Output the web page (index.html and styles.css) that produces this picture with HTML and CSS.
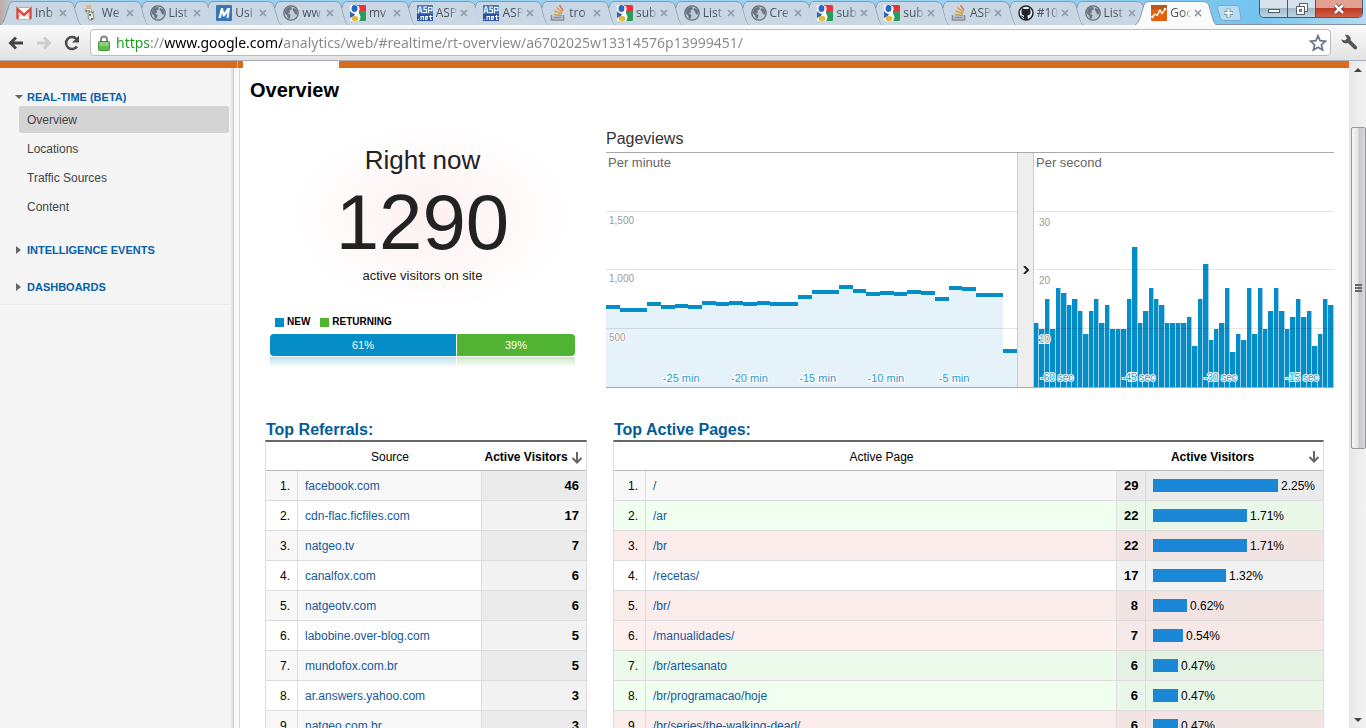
FILE: index.html
```html
<!doctype html>
<html lang="en">
  <head>
    <meta charset="UTF-8" />
    <meta name="viewport" content="width=device-width, initial-scale=1.0" />
    <title>Google Analytics</title>
    <link rel="stylesheet" href="styles.css">
  </head>
  <body>
    <svg class="sprite" aria-hidden="true">
      <symbol id="tab-shape" viewBox="0 0 82 25" preserveAspectRatio="none">
        <path d="M15 25Q13 25 11 19L8 8Q9 1 13 1H68Q73 1 74 5L78 19Q80 25 82 25Z" fill="#c9d7e5" />
        <path d="M8 8Q9 1.500 13 1.500H68Q73 1.500 74 5L78 19Q80 25 82 25" fill="none" stroke="#8d9bab" />
      </symbol>
      <symbol id="tab-first" viewBox="0 0 82 25" preserveAspectRatio="none">
        <path d="M0 25Q3 24 5 18L9 5Q10 1.500 14 1.500H68Q73 1.500 74 5L78 19Q80 25 82 25" fill="#c9d7e5" stroke="#8d9bab" />
      </symbol>
      <symbol id="tab-active" viewBox="0 0 82 26" preserveAspectRatio="none">
        <path d="M0 26V25Q3 24 5 18L9 5Q10 1.500 14 1.500H68Q73 1.500 74 5L78 19Q80 25 82 25V26Z" fill="#fafafa" />
        <path d="M0 25Q3 24 5 18L9 5Q10 1.500 14 1.500H68Q73 1.500 74 5L78 19Q80 25 82 25" fill="none" stroke="#8d9bab" />
      </symbol>
      <symbol id="i-gmail" viewBox="0 0 16 16">
        <path d="M1 3h14v11H1z" fill="#fff" />
        <path d="M1 14L6 8M15 14l-5-6" stroke="#d8a8a5" />
        <path d="M1.500 14V4L8 10l6.500-6v10" fill="none" stroke="#dc4a41" stroke-width="2.400" />
        <path d="M1 2.500h14M1 14.500h14" stroke="#e79b96" />
      </symbol>
      <symbol id="i-pot" viewBox="0 0 16 16">
        <path d="M3 1q2 0 2 2M6 0q2 1 1 3" fill="none" stroke="#eba95b" stroke-width="1.500" />
        <path d="M2 4l6-.5 1 3-5 2z" fill="#f5f0e2" stroke="#a59a7c" stroke-width=".7" />
        <path d="M5 8l4-1.500 1.500 4 .5 3-3 2-2.500-1.500z" fill="#e9e8e0" stroke="#76745f" stroke-width=".7" />
        <path d="M2.500 5h2v2h-2zM6 9h2v2H6zM8 13h2v2H8z" fill="#6f8048" />
        <path d="M5 5.500h2v1H5zM8 7.500l3-1v1z" fill="#444" />
      </symbol>
      <symbol id="i-globe" viewBox="0 0 16 16">
        <circle cx="8" cy="8" r="7.200" fill="#c2cbd3" stroke="#5f6c77" stroke-width="1.300" />
        <path d="M3 3.500L6 2l3 .5-.5 2L6.500 5.500 7 7.500 5 8.500 7.500 10 7 13l-2 1-1-3.500L1.500 8zM10 3l3 1 1.500 3-1 3-1.500-1-1.500-3-1-1z" fill="#6a7782" />
      </symbol>
      <symbol id="i-m" viewBox="0 0 16 16">
        <rect width="16" height="16" rx="1" fill="#3a77b8" />
        <path d="M2.500 13L5 3h2l1 5 3.500-5h2.500l-1.500 10h-2l1-5.500-3 4H7L6 8l-1.200 5z" fill="#fff" />
      </symbol>
      <symbol id="i-google" viewBox="0 0 16 16">
        <rect width="16" height="16" rx="1" fill="#fff" />
        <path d="M7 0h8q1 0 1 1v5H9z" fill="#e8323c" />
        <path d="M9 6h7v9q0 1-1 1H9q3-4 0-7z" fill="#2a9d5c" />
        <path d="M0 6q2 3 5 3L4 11l-4 2z" fill="#2f66c4" />
        <ellipse cx="4.500" cy="3.500" rx="3" ry="3.500" fill="#2868c8" />
        <ellipse cx="5" cy="13.500" rx="3.500" ry="2.500" fill="#e5b73b" />
        <path d="M8 1q2 4-1 6l2 3" fill="none" stroke="#fff" stroke-width="1.500" />
      </symbol>
      <symbol id="i-asp" viewBox="0 0 16 16">
        <rect width="16" height="16" rx="1" fill="#4878c0" />
        <rect y="9" width="16" height="7" fill="#2b51a3" />
        <path d="M1 8l1.500-6h1L5 8M2 6h2.500M10 2H7v2.500h2.500V7.500H6M11.500 8V2.500H15v3h-3M1 14.500h1M4 15v-3.500h2.500V15M10.500 14.500h-2v-3h2v1.500h-2M12 11.500h3.500M13.500 10v4.500h1.500" fill="none" stroke="#fff" stroke-width="1.100" />
      </symbol>
      <symbol id="i-stack" viewBox="0 0 16 16">
        <path d="M1.500 10v5h12v-5" fill="none" stroke="#8b8d90" stroke-width="1.700" />
        <path d="M3.500 12.500h8" stroke="#8b8d90" stroke-width="1.700" />
        <path d="M4 9.500l8 1" stroke="#b89b5c" stroke-width="1.600" />
        <path d="M4.500 6l7.500 2.800" stroke="#dd9c3c" stroke-width="1.600" />
        <path d="M6.500 2.500l6 4.800" stroke="#e8993c" stroke-width="1.600" />
        <path d="M9.500 0l3.500 5.500" stroke="#e27552" stroke-width="1.600" />
      </symbol>
      <symbol id="i-github" viewBox="0 0 16 16">
        <circle cx="8" cy="8" r="7" fill="#e8edf2" stroke="#20252b" stroke-width="1.500" />
        <path d="M4 3l2 1h4l2-1 .5 3q.5 4-3 4.500L10 15H6v-4.500Q3 10 3.500 6z" fill="#20252b" />
        <path d="M3 11q2 0 3 2" fill="none" stroke="#20252b" />
      </symbol>
      <symbol id="i-analytics" viewBox="0 0 16 16">
        <rect width="16" height="16" rx="1" fill="#e2610f" />
        <path d="M0 0h16v4H0z" fill="#b9561c" />
        <path d="M1 12l3-3 2 1.500 3-5 2 3 3.500-5" fill="none" stroke="#fff" stroke-width="1.300" />
        <circle cx="1.500" cy="12" r="1.300" fill="#fff" />
        <circle cx="8.800" cy="6" r="1.300" fill="#fff" />
        <circle cx="14" cy="4" r="1.300" fill="#fff" />
      </symbol>
      <symbol id="i-down" viewBox="0 0 12 12">
        <path d="M6 0v10M1.500 6L6 10.500 10.500 6" fill="none" stroke="#666" stroke-width="2" />
      </symbol>
    </svg>

    <header class="titlebar">
      <nav class="tabs" aria-label="Open tabs">
        <div class="tab"><svg class="tab-bg"><use href="#tab-first" /></svg><svg class="favicon"><use href="#i-gmail" /></svg><a href="#">Inb</a><button aria-label="Close tab"><svg viewBox="0 0 8 8"><path d="M1 1l6 6M7 1l-6 6" /></svg></button></div>
        <div class="tab"><svg class="tab-bg"><use href="#tab-shape" /></svg><svg class="favicon"><use href="#i-pot" /></svg><a href="#">We</a><button aria-label="Close tab"><svg viewBox="0 0 8 8"><path d="M1 1l6 6M7 1l-6 6" /></svg></button></div>
        <div class="tab"><svg class="tab-bg"><use href="#tab-shape" /></svg><svg class="favicon"><use href="#i-globe" /></svg><a href="#">List</a><button aria-label="Close tab"><svg viewBox="0 0 8 8"><path d="M1 1l6 6M7 1l-6 6" /></svg></button></div>
        <div class="tab"><svg class="tab-bg"><use href="#tab-shape" /></svg><svg class="favicon"><use href="#i-m" /></svg><a href="#">Usi</a><button aria-label="Close tab"><svg viewBox="0 0 8 8"><path d="M1 1l6 6M7 1l-6 6" /></svg></button></div>
        <div class="tab"><svg class="tab-bg"><use href="#tab-shape" /></svg><svg class="favicon"><use href="#i-globe" /></svg><a href="#">ww</a><button aria-label="Close tab"><svg viewBox="0 0 8 8"><path d="M1 1l6 6M7 1l-6 6" /></svg></button></div>
        <div class="tab"><svg class="tab-bg"><use href="#tab-shape" /></svg><svg class="favicon"><use href="#i-google" /></svg><a href="#">mv</a><button aria-label="Close tab"><svg viewBox="0 0 8 8"><path d="M1 1l6 6M7 1l-6 6" /></svg></button></div>
        <div class="tab"><svg class="tab-bg"><use href="#tab-shape" /></svg><svg class="favicon"><use href="#i-asp" /></svg><a href="#">ASP</a><button aria-label="Close tab"><svg viewBox="0 0 8 8"><path d="M1 1l6 6M7 1l-6 6" /></svg></button></div>
        <div class="tab"><svg class="tab-bg"><use href="#tab-shape" /></svg><svg class="favicon"><use href="#i-asp" /></svg><a href="#">ASP</a><button aria-label="Close tab"><svg viewBox="0 0 8 8"><path d="M1 1l6 6M7 1l-6 6" /></svg></button></div>
        <div class="tab"><svg class="tab-bg"><use href="#tab-shape" /></svg><svg class="favicon"><use href="#i-stack" /></svg><a href="#">tro</a><button aria-label="Close tab"><svg viewBox="0 0 8 8"><path d="M1 1l6 6M7 1l-6 6" /></svg></button></div>
        <div class="tab"><svg class="tab-bg"><use href="#tab-shape" /></svg><svg class="favicon"><use href="#i-google" /></svg><a href="#">sub</a><button aria-label="Close tab"><svg viewBox="0 0 8 8"><path d="M1 1l6 6M7 1l-6 6" /></svg></button></div>
        <div class="tab"><svg class="tab-bg"><use href="#tab-shape" /></svg><svg class="favicon"><use href="#i-globe" /></svg><a href="#">List</a><button aria-label="Close tab"><svg viewBox="0 0 8 8"><path d="M1 1l6 6M7 1l-6 6" /></svg></button></div>
        <div class="tab"><svg class="tab-bg"><use href="#tab-shape" /></svg><svg class="favicon"><use href="#i-globe" /></svg><a href="#">Cre</a><button aria-label="Close tab"><svg viewBox="0 0 8 8"><path d="M1 1l6 6M7 1l-6 6" /></svg></button></div>
        <div class="tab"><svg class="tab-bg"><use href="#tab-shape" /></svg><svg class="favicon"><use href="#i-google" /></svg><a href="#">sub</a><button aria-label="Close tab"><svg viewBox="0 0 8 8"><path d="M1 1l6 6M7 1l-6 6" /></svg></button></div>
        <div class="tab"><svg class="tab-bg"><use href="#tab-shape" /></svg><svg class="favicon"><use href="#i-google" /></svg><a href="#">sub</a><button aria-label="Close tab"><svg viewBox="0 0 8 8"><path d="M1 1l6 6M7 1l-6 6" /></svg></button></div>
        <div class="tab"><svg class="tab-bg"><use href="#tab-shape" /></svg><svg class="favicon"><use href="#i-stack" /></svg><a href="#">ASP</a><button aria-label="Close tab"><svg viewBox="0 0 8 8"><path d="M1 1l6 6M7 1l-6 6" /></svg></button></div>
        <div class="tab"><svg class="tab-bg"><use href="#tab-shape" /></svg><svg class="favicon"><use href="#i-github" /></svg><a href="#">#10</a><button aria-label="Close tab"><svg viewBox="0 0 8 8"><path d="M1 1l6 6M7 1l-6 6" /></svg></button></div>
        <div class="tab"><svg class="tab-bg"><use href="#tab-shape" /></svg><svg class="favicon"><use href="#i-globe" /></svg><a href="#">List</a><button aria-label="Close tab"><svg viewBox="0 0 8 8"><path d="M1 1l6 6M7 1l-6 6" /></svg></button></div>
        <div class="tab active"><svg class="tab-bg"><use href="#tab-active" /></svg><svg class="favicon"><use href="#i-analytics" /></svg><a href="#">Goo</a><button aria-label="Close tab"><svg viewBox="0 0 8 8"><path d="M1 1l6 6M7 1l-6 6" /></svg></button></div>
      </nav>
      <button class="new-tab" aria-label="New tab">
        <svg viewBox="0 0 26 16" width="26" height="16">
          <path d="M1.500 3Q1 .5 3 .5h17q2 0 3 2l2 10q.5 3-2 3H8q-2.500 0-3.500-2z" fill="#b5dcf1" stroke="#7fa9c2" />
          <path d="M12.500 3.500v9M8 8h9" stroke="#6b95ae" stroke-width="4" />
          <path d="M12.500 4v8M8.500 8h8" stroke="#fff" stroke-width="2" />
        </svg>
      </button>
      <div class="window-buttons">
        <button class="win" aria-label="Minimize">
          <svg viewBox="0 0 14 12" width="14" height="12"><rect x="1.500" y="6.500" width="11" height="3" fill="#fff" stroke="#555c68" /></svg>
        </button>
        <button class="win" aria-label="Restore">
          <svg viewBox="0 0 14 12" width="14" height="12"><path d="M4.500.5h8v8h-8z" fill="#fff" stroke="#555c68" /><path d="M1.500 3.500h8v8h-8z" fill="#fff" stroke="#555c68" /><path d="M4.500 6.500h2v2h-2z" fill="#8bb" stroke="#555c68" /></svg>
        </button>
        <button class="win win-close" aria-label="Close">
          <svg viewBox="0 0 14 12" width="14" height="12"><path d="M3 2l8 8M11 2l-8 8" stroke="#5f3030" stroke-width="4" /><path d="M3 2l8 8M11 2l-8 8" stroke="#fff" stroke-width="2.500" /></svg>
        </button>
      </div>
    </header>

    <div class="toolbar">
      <button aria-label="Back">
        <svg viewBox="0 0 16 14" width="16" height="14"><path d="M15 7H3M8 1.500L2.500 7 8 12.500" fill="none" stroke="#444" stroke-width="3" /></svg>
      </button>
      <button aria-label="Forward">
        <svg viewBox="0 0 16 14" width="16" height="14"><path d="M1 7h12M8 1.500L13.500 7 8 12.500" fill="none" stroke="#cdcdcd" stroke-width="3" /></svg>
      </button>
      <button aria-label="Reload">
        <svg viewBox="0 0 16 16" width="16" height="16"><path d="M13 11.500A6 6 0 1 1 12.500 4" fill="none" stroke="#4a4a4a" stroke-width="2.500" /><path d="M15 .5V7.500H8z" fill="#4a4a4a" /></svg>
      </button>
      <div class="omnibox">
        <svg viewBox="0 0 12 16" width="12" height="16">
          <path d="M3 8V4.500Q3 1.500 6 1.500T9 4.500V8" fill="none" stroke="#7f8a86" stroke-width="2" />
          <rect x=".5" y="6.500" width="11" height="9" rx="1" fill="#62bb50" stroke="#44903b" />
          <path d="M1 8h10M1 10h10" stroke="#b2e0a0" />
        </svg>
        <input class="url" type="text" aria-label="Address" spellcheck="false" value="https://www.google.com/analytics/web/#realtime/rt-overview/a6702025w13314576p13999451/" />
        <button aria-label="Bookmark this page">
          <svg viewBox="0 0 18 18" width="18" height="18"><path d="M9 1.800l2.100 4.900 5.300.5-4 3.500 1.200 5.200L9 13.200l-4.600 2.700 1.200-5.200-4-3.500 5.300-.5z" fill="#fff" stroke="#69738d" stroke-width="1.700" /></svg>
        </button>
      </div>
      <button aria-label="Settings">
        <svg viewBox="0 0 17 17" width="17" height="17"><path d="M4 .8Q8 0 9.500 3.500q.5 1.500 0 2.500l6.300 6.500q.8 1 0 2.200-1.200 1.300-2.500.5L7 9Q3 10.500.8 7L.5 5.500l3.500 1L6 4.500z" fill="#555" /></svg>
      </button>
    </div>

    <div class="viewport">
      <div class="page">
        <div class="topbar">
          <span class="topbar-left"></span>
          <span class="topbar-tab"></span>
          <span class="topbar-rest"></span>
        </div>
        <div class="columns">
          <aside class="sidebar">
            <nav class="menu">
              <a class="menu-title open" href="#">REAL-TIME (BETA)</a>
              <ul>
                <li><a class="selected" href="#">Overview</a></li>
                <li><a href="#">Locations</a></li>
                <li><a href="#">Traffic Sources</a></li>
                <li><a href="#">Content</a></li>
              </ul>
              <a class="menu-title" href="#">INTELLIGENCE EVENTS</a>
              <a class="menu-title" href="#">DASHBOARDS</a>
            </nav>
          </aside>
          <div class="splitter"></div>

          <main class="content">
            <h1>Overview</h1>
            <div class="overview">
              <section class="visitors">
                <div class="counter">
                  <h2>Right now</h2>
                  <p class="count">1290</p>
                  <p class="caption">active visitors on site</p>
                </div>
                <div class="legend">
                  <span class="key key-new">NEW</span>
                  <span class="key key-returning">RETURNING</span>
                </div>
                <div class="split">
                  <span class="split-new" style="width: 61%">61%</span>
                  <span class="split-returning">39%</span>
                </div>
                <div class="reflection">
                  <span class="reflect-new" style="width: 61%"></span>
                  <span class="reflect-returning"></span>
                </div>
              </section>

              <section class="pageviews">
                <h2>Pageviews</h2>
                <div class="charts">
                  <div class="chart chart-minute">
                    <div class="bars" id="perMinute"></div>
                    <div class="grid"><span></span><span>1,500</span><span>1,000</span><span>500</span></div>
                    <h3>Per minute</h3>
                    <div class="axis"><span>-25 min</span><span>-20 min</span><span>-15 min</span><span>-10 min</span><span>-5 min</span></div>
                  </div>
                  <button class="expander" aria-label="Expand">
                    <svg viewBox="0 0 6 8" width="6" height="8"><path d="M1 0l4 4-4 4" fill="none" stroke="#222" stroke-width="2" /></svg>
                  </button>
                  <div class="chart chart-second">
                    <div class="bars" id="perSecond"></div>
                    <div class="grid"><span></span><span>30</span><span>20</span><span>10</span></div>
                    <h3>Per second</h3>
                    <div class="axis"><span>-60 sec</span><span>-45 sec</span><span>-30 sec</span><span>-15 sec</span></div>
                  </div>
                </div>
              </section>
            </div>

            <div class="reports">
              <section class="referrals">
                <h2>Top Referrals:</h2>
                <table>
                  <colgroup><col class="col-rank" /><col /><col class="col-total" /></colgroup>
                  <thead>
                    <tr><th></th><th>Source</th><th class="sorted"><span>Active Visitors</span> <svg class="sort"><use href="#i-down" /></svg></th></tr>
                  </thead>
                  <tbody>
                    <tr><td>1.</td><td><a href="#">facebook.com</a></td><td class="metric">46</td></tr>
                    <tr><td>2.</td><td><a href="#">cdn-flac.ficfiles.com</a></td><td class="metric">17</td></tr>
                    <tr><td>3.</td><td><a href="#">natgeo.tv</a></td><td class="metric">7</td></tr>
                    <tr><td>4.</td><td><a href="#">canalfox.com</a></td><td class="metric">6</td></tr>
                    <tr><td>5.</td><td><a href="#">natgeotv.com</a></td><td class="metric">6</td></tr>
                    <tr><td>6.</td><td><a href="#">labobine.over-blog.com</a></td><td class="metric">5</td></tr>
                    <tr><td>7.</td><td><a href="#">mundofox.com.br</a></td><td class="metric">5</td></tr>
                    <tr><td>8.</td><td><a href="#">ar.answers.yahoo.com</a></td><td class="metric">3</td></tr>
                    <tr><td>9.</td><td><a href="#">natgeo.com.br</a></td><td class="metric">3</td></tr>
                  </tbody>
                </table>
              </section>

              <section class="active-pages">
                <h2>Top Active Pages:</h2>
                <table>
                  <colgroup><col class="col-rank" /><col /><col class="col-count" /><col class="col-share" /></colgroup>
                  <thead>
                    <tr><th></th><th>Active Page</th><th class="sorted" colspan="2"><div class="sort-row"><span>Active Visitors</span><svg class="sort"><use href="#i-down" /></svg></div></th></tr>
                  </thead>
                  <tbody>
                    <tr><td>1.</td><td><a href="#">/</a></td><td class="metric">29</td><td class="metric share"><div><span class="bar" style="width: 125px"></span>2.25%</div></td></tr>
                    <tr class="up"><td>2.</td><td><a href="#">/ar</a></td><td class="metric">22</td><td class="metric share"><div><span class="bar" style="width: 94px"></span>1.71%</div></td></tr>
                    <tr class="down"><td>3.</td><td><a href="#">/br</a></td><td class="metric">22</td><td class="metric share"><div><span class="bar" style="width: 94px"></span>1.71%</div></td></tr>
                    <tr><td>4.</td><td><a href="#">/recetas/</a></td><td class="metric">17</td><td class="metric share"><div><span class="bar" style="width: 73px"></span>1.32%</div></td></tr>
                    <tr class="down"><td>5.</td><td><a href="#">/br/</a></td><td class="metric">8</td><td class="metric share"><div><span class="bar" style="width: 34px"></span>0.62%</div></td></tr>
                    <tr class="down"><td>6.</td><td><a href="#">/manualidades/</a></td><td class="metric">7</td><td class="metric share"><div><span class="bar" style="width: 30px"></span>0.54%</div></td></tr>
                    <tr class="up"><td>7.</td><td><a href="#">/br/artesanato</a></td><td class="metric">6</td><td class="metric share"><div><span class="bar" style="width: 25px"></span>0.47%</div></td></tr>
                    <tr class="up"><td>8.</td><td><a href="#">/br/programacao/hoje</a></td><td class="metric">6</td><td class="metric share"><div><span class="bar" style="width: 25px"></span>0.47%</div></td></tr>
                    <tr class="down"><td>9.</td><td><a href="#">/br/series/the-walking-dead/</a></td><td class="metric">6</td><td class="metric share"><div><span class="bar" style="width: 25px"></span>0.47%</div></td></tr>
                  </tbody>
                </table>
              </section>
            </div>
          </main>
        </div>
      </div>

      <div class="scrollbar" aria-hidden="true">
        <svg viewBox="0 0 8 4" width="8" height="4"><path d="M0 4l4-4 4 4z" fill="#444" /></svg>
        <div class="track">
          <div class="thumb"><span></span><span></span><span></span></div>
        </div>
        <svg viewBox="0 0 8 4" width="8" height="4"><path d="M0 0l4 4 4-4z" fill="#444" /></svg>
      </div>
    </div>

    <script src="charts.js"></script>
  </body>
</html>
```

FILE: styles.css
```css
* {
  box-sizing: border-box;
}
body {
  margin: 0;
  height: 100vh;
  display: flex;
  flex-direction: column;
  overflow: hidden;
  font-family: "Liberation Sans", Arial, sans-serif;
  font-size: 12px;
  color: #000;
  background: #fff;
}
h1,
h2,
h3,
p,
ul {
  margin: 0;
  padding: 0;
}
ul {
  list-style: none;
}
a {
  color: #15599c;
  text-decoration: none;
}
button {
  padding: 0;
  border: 0;
  background: none;
  font: inherit;
}
button svg {
  display: block;
}
.sprite {
  position: absolute;
  width: 0;
  height: 0;
}

/* Window title bar and tabs */
.titlebar {
  display: flex;
  flex: none;
  height: 25px;
  background: linear-gradient(90deg, #c0a9a4, #b3d3e9 1%, #94d0f2 8%, #94d2f4 75%, #74c4f0 92%, #b4dcf2);
  box-shadow: inset 0 -1px #8592a0;
}
.tabs {
  display: flex;
  flex: 1;
  min-width: 0;
  padding-right: 14px;
}
.tab {
  position: relative;
  display: flex;
  flex: 1 1 0;
  align-items: center;
  min-width: 0;
  padding-left: 16px;
  font-family: "Open Sans", "Noto Sans", sans-serif;
  font-size: 12px;
}
.tab-bg {
  position: absolute;
  top: 0;
  left: 0;
  width: calc(100% + 15px);
  height: 25px;
}
.tab.active .tab-bg {
  height: 26px;
}
.favicon {
  position: relative;
  flex: none;
  width: 16px;
  height: 16px;
}
.tab a {
  position: relative;
  flex: none;
  width: 22px;
  margin-left: 3px;
  overflow: hidden;
  white-space: nowrap;
  color: #4c535b;
  mask-image: linear-gradient(90deg, #000 60%, transparent);
}
.tab button {
  position: relative;
  flex: none;
  margin-left: 2px;
}
.tab button svg {
  width: 8px;
  height: 8px;
  stroke: #8d98a4;
  stroke-width: 1.5;
}
.new-tab {
  align-self: center;
  flex: none;
}
.window-buttons {
  display: flex;
  flex: none;
  height: 18px;
  margin: 0 3px 0 17px;
  border: 1px solid #49576a;
  border-top: 0;
  border-radius: 0 0 5px 5px;
  overflow: hidden;
}
.win {
  display: grid;
  place-items: center;
  width: 28px;
  border-right: 1px solid #49576a;
  background: linear-gradient(#d5e2ec 45%, #9fb9cb 50%, #bed5e3);
}
.win-close {
  width: 46px;
  border-right: 0;
  background: linear-gradient(#e2a091 45%, #c13a24 50%, #cf6046);
}

/* Toolbar */
.toolbar {
  display: flex;
  flex: none;
  align-items: center;
  gap: 12px;
  height: 36px;
  padding: 0 8px;
  border-bottom: 1px solid #a9aeb8;
  background: linear-gradient(#fafafa, #e3e3e3);
}
.omnibox {
  display: flex;
  flex: 1;
  align-items: center;
  gap: 6px;
  height: 27px;
  margin: 0 -2px 0 -2px;
  padding: 0 3px 0 7px;
  border: 1px solid #bcbcbc;
  border-radius: 4px;
  background: #fff;
}
.url {
  flex: 1;
  min-width: 0;
  height: 25px;
  padding: 0;
  border: 0;
  outline: 0;
  font-family: "Noto Sans", "Open Sans", sans-serif;
  font-size: 14px;
  background-image: linear-gradient(90deg, #1a9b1a 34px, #888 34px 49px, #000 49px 166px, #888 166px);
  -webkit-background-clip: text;
  background-clip: text;
  -webkit-text-fill-color: transparent;
}

/* Page frame */
.viewport {
  display: flex;
  flex: 1;
  min-height: 0;
}
.page {
  display: flex;
  flex: 1;
  flex-direction: column;
  min-width: 0;
  overflow: hidden;
}
.topbar {
  display: flex;
  flex: none;
  height: 7px;
}
.topbar-left {
  width: 243px;
  background: linear-gradient(90deg, #d96b20 237px, #eda574 237px 238px, #d96b20 238px);
}
.topbar-tab {
  width: 96px;
}
.topbar-rest {
  flex: 1;
  background: #d96b20;
}
.columns {
  display: flex;
  flex: 1;
  min-height: 0;
}
.sidebar {
  flex: none;
  width: 234px;
  border-right: 1px solid #ccc;
  background: linear-gradient(90deg, transparent 230px, #ddd), #f5f5f5;
}
.splitter {
  flex: none;
  width: 6px;
  border-right: 1px solid #d8d8d8;
  background: #f8f8f8;
}
.menu {
  padding: 20px 4px 8px 19px;
  border-bottom: 1px solid #ebebeb;
}
.menu-title {
  display: flex;
  align-items: center;
  gap: 6px;
  height: 18px;
  margin: 0 0 19px -3px;
  font-size: 11px;
  font-weight: bold;
  color: #0860a8;
}
.menu-title:last-child {
  margin-bottom: 0;
}
.menu-title::before {
  content: "";
  border: 4px solid transparent;
  border-left: 5px solid #666;
  border-right: 0;
}
.menu-title.open {
  gap: 4px;
  margin: 0 0 0 -4px;
}
.menu-title.open::before {
  border: 4px solid transparent;
  border-top-color: #666;
  border-bottom: 0;
}
.menu ul {
  display: grid;
  gap: 2px;
  margin-bottom: 21px;
}
.menu li a {
  display: block;
  padding: 1px 8px 0;
  border-radius: 2px;
  line-height: 26px;
  color: #444;
}
.menu li a.selected {
  background: #d4d4d4;
}
.content {
  flex: 1;
  min-width: 0;
}
h1 {
  padding: 10px 10px 0;
  font-size: 20px;
  line-height: 24px;
}

/* Visitor counter */
.overview {
  display: flex;
  gap: 31px;
  padding: 24px 15px 0 30px;
}
.visitors {
  flex: none;
  width: 305px;
}
.counter {
  height: 188px;
  padding-top: 16px;
  text-align: center;
  color: #222;
  background: radial-gradient(ellipse 140px 94px at 162px 90px, #fdf0ef, #fff);
}
.counter h2 {
  font-size: 26px;
  font-weight: normal;
  line-height: 36px;
}
.count {
  font-size: 78px;
  line-height: 88px;
}
.caption {
  font-size: 13px;
  line-height: 20px;
}
.legend {
  display: flex;
  gap: 10px;
  padding: 0 5px;
  font-size: 10px;
  font-weight: bold;
  line-height: 16px;
}
.key {
  display: flex;
  align-items: center;
  gap: 3px;
}
.key::before {
  content: "";
  width: 9px;
  height: 9px;
  background: #058dc7;
}
.key-returning::before {
  background: #50b432;
}
.split {
  display: flex;
  gap: 1px;
  height: 22px;
  margin-top: 4px;
  border-radius: 4px;
  overflow: hidden;
  font-size: 11px;
  line-height: 22px;
  text-align: center;
  color: #fff;
}
.split-new {
  background: #058dc7;
}
.split-returning {
  flex: 1;
  background: #50b432;
}
.reflection {
  display: flex;
  gap: 1px;
  height: 10px;
  margin-top: 1px;
}
.reflect-new {
  background: linear-gradient(#b9dff0, #fff);
}
.reflect-returning {
  flex: 1;
  background: linear-gradient(#cbe8c3, #fff);
}

/* Pageviews charts */
.pageviews {
  flex: 1;
  min-width: 0;
}
.pageviews h2 {
  font-size: 16px;
  font-weight: normal;
  line-height: 26px;
  color: #333;
}
.charts {
  display: flex;
  height: 236px;
  border-top: 1px solid #aaa;
  border-bottom: 1px solid #aaa;
}
.chart {
  position: relative;
  min-width: 0;
}
.chart-minute {
  flex: 411;
}
.chart-second {
  flex: 300;
}
.chart h3 {
  position: absolute;
  top: 1px;
  left: 2px;
  font-size: 13px;
  font-weight: normal;
  line-height: 18px;
  color: #666;
}
.bars {
  display: flex;
  align-items: flex-end;
  height: 100%;
}
.bars span {
  flex: 1;
}
#perMinute span {
  border-top: 4px solid #058dc7;
  background: #e5f2f9;
}
#perSecond span {
  border-right: 1px solid #9bd0e8;
  background: #058dc7;
}
.grid {
  position: absolute;
  inset: 0;
  display: grid;
  grid-template-rows: repeat(4, 1fr);
}
.grid span {
  padding: 2px 3px;
  border-bottom: 1px solid rgba(0, 0, 0, 0.1);
  font-size: 10px;
  line-height: 14px;
  color: #999;
  -webkit-text-stroke: 2px #fff;
  paint-order: stroke fill;
}
.grid span:last-child {
  border-bottom: 0;
}
.chart-second .grid span {
  padding: 4px 5px;
}
.axis {
  position: absolute;
  bottom: 1px;
  left: 10%;
  right: 7%;
  display: flex;
  font-size: 11px;
  line-height: 16px;
  text-align: center;
  color: #2a97cc;
  -webkit-text-stroke: 2px #fff;
  paint-order: stroke fill;
}
.axis span {
  flex: 1;
}
.chart-second .axis {
  left: -6%;
  right: -3%;
  font-size: 10px;
}
.expander {
  display: grid;
  place-items: center;
  flex: none;
  width: 17px;
  border: solid #ccc;
  border-width: 0 1px;
  background: #eee;
}

/* Report tables */
.reports {
  display: flex;
  gap: 26px;
  padding: 31px 25px 0 25px;
}
.referrals {
  flex: none;
  width: 322px;
}
.active-pages {
  flex: 1;
  min-width: 0;
}
.reports h2 {
  padding-left: 1px;
  font-size: 16px;
  line-height: 21px;
  color: #005c9c;
}
table {
  width: 100%;
  table-layout: fixed;
  border-spacing: 0;
  border: solid #dcdcdc;
  border-width: 0 1px;
  border-top: 2px solid #666;
}
.col-rank {
  width: 32px;
}
.col-total {
  width: 104px;
}
.col-count {
  width: 29px;
}
.col-share {
  width: 177px;
}
th {
  height: 29px;
  padding: 2px 0 0;
  border-bottom: 1px solid #bbb;
  font-weight: normal;
}
th.sorted {
  padding-right: 3px;
  font-weight: bold;
  text-align: right;
  white-space: nowrap;
}
.sort {
  width: 12px;
  height: 12px;
  vertical-align: middle;
}
.sort-row {
  display: flex;
  align-items: center;
  text-align: center;
}
.sort-row span {
  flex: 1;
}
td {
  height: 30px;
  padding: 0 7px;
  border-right: 1px solid #dcdcdc;
  border-bottom: 1px solid #dcdcdc;
}
td:first-child {
  padding-left: 0;
  text-align: right;
}
td:last-child {
  border-right: 0;
}
tbody tr:nth-child(odd) {
  background: #f8f8f8;
}
tbody tr.up {
  background: #f0fff0;
}
tbody tr.up:nth-child(odd) {
  background: #ebfaeb;
}
tbody tr.down {
  background: #fff0f0;
}
tbody tr.down:nth-child(odd) {
  background: #fbecec;
}
.metric {
  background: rgba(0, 0, 0, 0.05);
  text-align: right;
  font-size: 13px;
  font-weight: bold;
}
.up .metric,
.down .metric {
  background: rgba(0, 0, 0, 0.03);
}
.metric.share {
  font-size: 12px;
  font-weight: normal;
}
.share div {
  display: flex;
  align-items: center;
  gap: 3px;
}
.bar {
  height: 13px;
  background: #1a87d7;
}

/* Scroll bar */
.scrollbar {
  display: flex;
  flex: none;
  flex-direction: column;
  align-items: center;
  width: 17px;
  padding: 7px 0 6px;
  border-left: 1px solid #e3e3e3;
  background: linear-gradient(90deg, #e8e8e8, #f3f3f3);
}
.track {
  flex: 1;
  width: 15px;
  padding-top: 55px;
}
.thumb {
  display: flex;
  flex-direction: column;
  align-items: center;
  justify-content: center;
  gap: 1px;
  height: 55%;
  max-height: 322px;
  min-height: 40px;
  border: 1px solid #989898;
  border-radius: 2px;
  background: linear-gradient(90deg, #f5f5f5, #e6e6e8 45%, #c6c6cb 55%, #d9d9dc);
}
.thumb span {
  width: 7px;
  height: 2px;
  background: #666;
}
```

FILE: charts.js
```js
const perMinute = [
  704, 675, 675, 723, 704, 706, 700, 732, 726, 738, 726, 738, 726, 723, 783,
  831, 831, 868, 840, 809, 820, 809, 831, 817, 772, 860, 857, 800, 800, 329,
];
const perSecond = [
  11, 10, 15, 10, 17, 16, 14, 15, 13, 9, 13, 15, 11, 14, 10, 10, 10, 15, 24,
  11, 13, 17, 15, 14, 11, 11, 11, 11, 12, 7, 15, 21, 8, 10, 11, 17, 6, 9, 8,
  17, 9, 17, 10, 13, 17, 13, 10, 12, 15, 12, 13, 7, 9, 15, 14,
];

// Fill a chart with one bar per value, scaled to the top grid line
function drawBars(id, values, max) {
  const chart = document.getElementById(id);
  values.forEach(function (value) {
    const bar = document.createElement("span");
    bar.style.height = (value / max) * 100 + "%";
    chart.appendChild(bar);
  });
}

drawBars("perMinute", perMinute, 2000);
drawBars("perSecond", perSecond, 40);
```
